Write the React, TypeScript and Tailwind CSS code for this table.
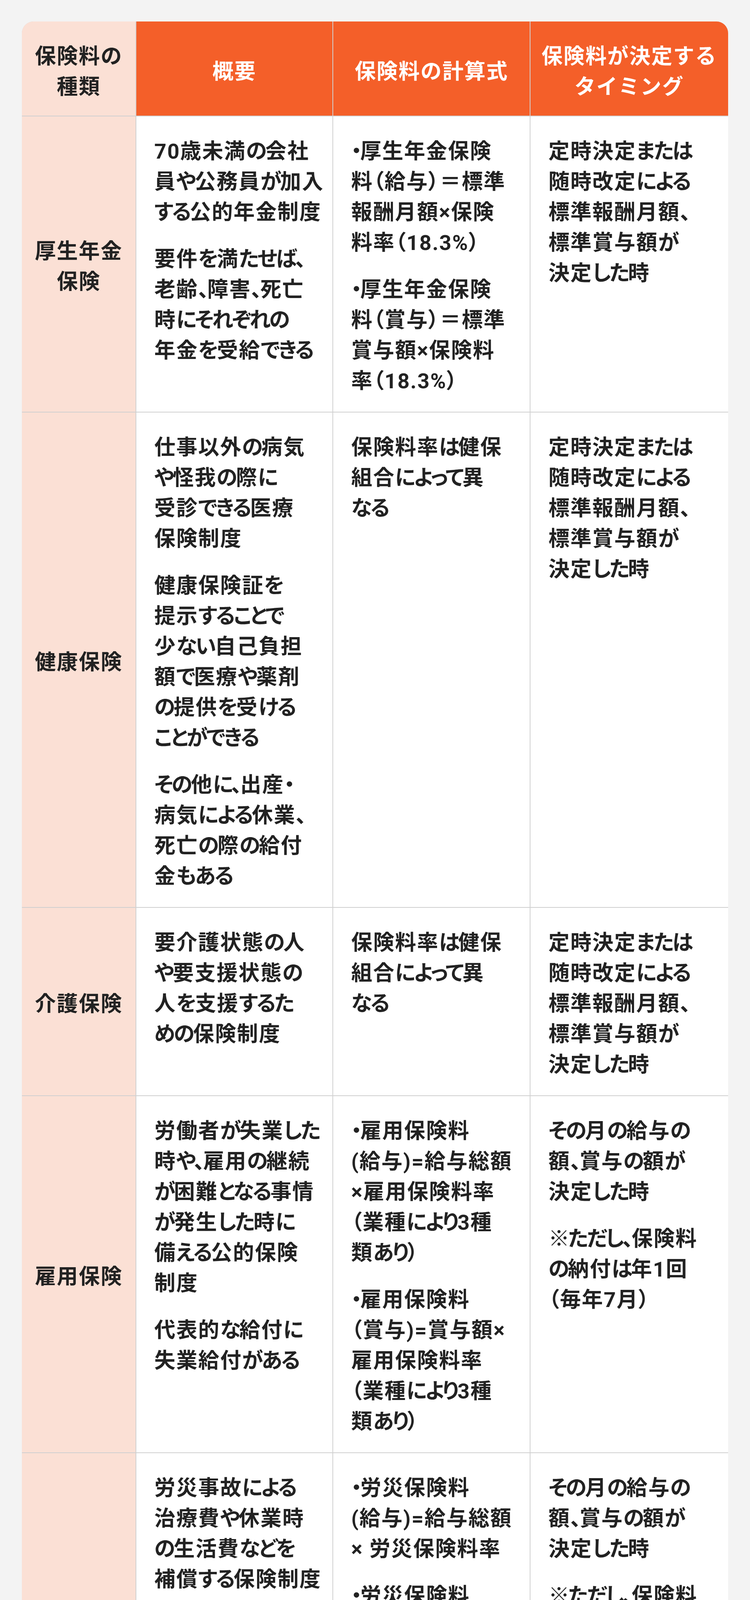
import React from 'react';

type Para = string[];

interface InsuranceRow {
  name: string[];
  overview: Para[];
  formula: Para[];
  timing: Para[];
}

const timingStandard: Para[] = [
  ['定時決定または', '随時改定による', '標準報酬月額、', '標準賞与額が', '決定した時'],
];

const timingMonthly: Para[] = [
  ['その月の給与の', '額、賞与の額が', '決定した時'],
  ['※ただし、保険料', 'の納付は年1回', '（毎年7月）'],
];

const rows: InsuranceRow[] = [
  {
    name: ['厚生年金', '保険'],
    overview: [
      ['70歳未満の会社', '員や公務員が加入', 'する公的年金制度'],
      ['要件を満たせば、', '老齢、障害、死亡', '時にそれぞれの', '年金を受給できる'],
    ],
    formula: [
      ['・厚生年金保険', '料（給与）＝標準', '報酬月額×保険', '料率（18.3%）'],
      ['・厚生年金保険', '料（賞与）＝標準', '賞与額×保険料', '率（18.3%）'],
    ],
    timing: timingStandard,
  },
  {
    name: ['健康保険'],
    overview: [
      ['仕事以外の病気', 'や怪我の際に', '受診できる医療', '保険制度'],
      ['健康保険証を', '提示することで', '少ない自己負担', '額で医療や薬剤', 'の提供を受ける', 'ことができる'],
      ['その他に、出産・', '病気による休業、', '死亡の際の給付', '金もある'],
    ],
    formula: [['保険料率は健保', '組合によって異', 'なる']],
    timing: timingStandard,
  },
  {
    name: ['介護保険'],
    overview: [['要介護状態の人', 'や要支援状態の', '人を支援するた', 'めの保険制度']],
    formula: [['保険料率は健保', '組合によって異', 'なる']],
    timing: timingStandard,
  },
  {
    name: ['雇用保険'],
    overview: [
      ['労働者が失業した', '時や、雇用の継続', 'が困難となる事情', 'が発生した時に', '備える公的保険', '制度'],
      ['代表的な給付に', '失業給付がある'],
    ],
    formula: [
      ['・雇用保険料', '(給与)=給与総額', '×雇用保険料率', '（業種により3種', '類あり）'],
      ['・雇用保険料', '（賞与)=賞与額×', '雇用保険料率', '（業種により3種', '類あり）'],
    ],
    timing: timingMonthly,
  },
  {
    name: ['労災保険'],
    overview: [['労災事故による', '治療費や休業時', 'の生活費などを', '補償する保険制度']],
    formula: [
      ['・労災保険料', '(給与)=給与総額', '× 労災保険料率'],
      ['・労災保険料', '（賞与)=賞与額', '× 労災保険料率'],
      ['※労災保険料のみ', '全額事業主負担'],
    ],
    timing: timingMonthly,
  },
];

// kana and punctuation sit tighter than kanji in the original
const kanaRun = /([\u3040-\u30ff、。※]+)/;

const TightLine: React.FC<{ text: string }> = ({ text }) => (
  <>
    {text.split(kanaRun).map((part, i) =>
      kanaRun.test(part) ? (
        <span key={i} className="tracking-[-0.07em]">
          {part}
        </span>
      ) : (
        <React.Fragment key={i}>{part}</React.Fragment>
      )
    )}
  </>
);

const Lines: React.FC<{ lines: string[]; tight?: boolean }> = ({ lines, tight }) => (
  <>
    {lines.map((line, i) => (
      <React.Fragment key={i}>
        {i > 0 && <br />}
        {tight ? <TightLine text={line} /> : line}
      </React.Fragment>
    ))}
  </>
);

const BodyCell: React.FC<{ paras: Para[] }> = ({ paras }) => (
  <div className="bg-white px-[46px] pt-[51px] pb-[39px] space-y-[42px] whitespace-nowrap [font-feature-settings:'palt']">
    {paras.map((p, i) => (
      <p key={i}>
        <Lines lines={p} tight />
      </p>
    ))}
  </div>
);

const HeaderCell: React.FC<{ lines: string[]; first?: boolean }> = ({ lines, first }) => (
  <div
    className={`h-[241px] pt-[16px] flex items-center justify-center text-center whitespace-nowrap ${
      first ? 'bg-[#fbe0d5] text-[#222222]' : 'bg-[#f45f29] text-white'
    }`}
  >
    <p>
      <Lines lines={lines} />
    </p>
  </div>
);

export default function App() {
  return (
    <div className="min-h-screen bg-[#f3f3f3] px-[56px] pt-[55px] pb-[52px]">
      <div className="grid grid-cols-[291px_502px_503px_506px] gap-[2px] bg-[#d0d0d0] rounded-[30px] overflow-hidden text-[#222222] text-[54px] leading-[78px] font-bold tracking-[0.04em] [font-family:Roboto,'Noto_Sans_CJK_JP',sans-serif]">
        <HeaderCell lines={['保険料の', '種類']} first />
        <HeaderCell lines={['概要']} />
        <HeaderCell lines={['保険料の計算式']} />
        <HeaderCell lines={['保険料が決定する', 'タイミング']} />

        {rows.map((row, i) => (
          <React.Fragment key={i}>
            <div className="bg-[#fbe0d5] pt-[14px] flex items-center justify-center text-center whitespace-nowrap">
              <p>
                <Lines lines={row.name} />
              </p>
            </div>
            <BodyCell paras={row.overview} />
            <BodyCell paras={row.formula} />
            <BodyCell paras={row.timing} />
          </React.Fragment>
        ))}
      </div>
    </div>
  );
}
